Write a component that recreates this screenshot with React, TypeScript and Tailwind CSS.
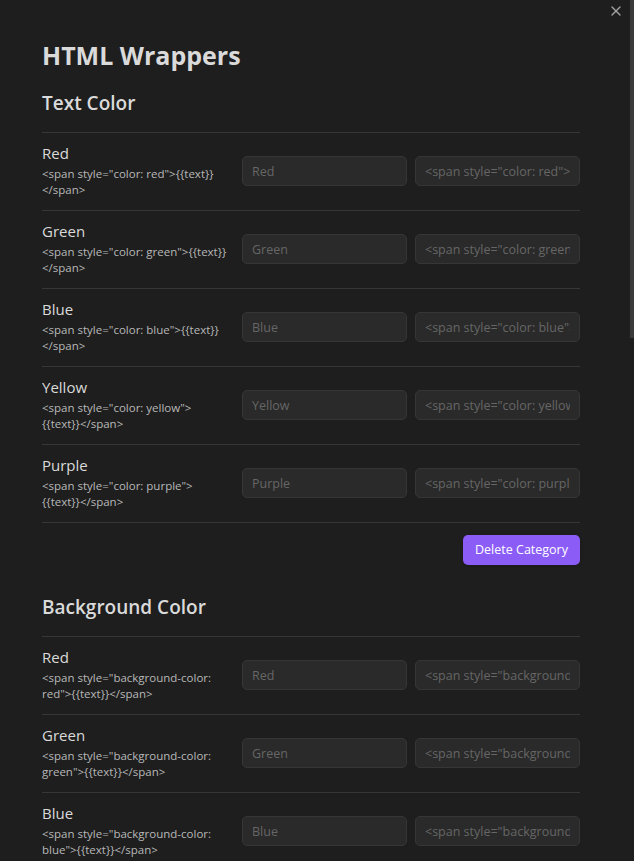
import { X } from "lucide-react";

type Wrapper = { name: string; lines: [string, string]; value: string };

const textColors: Wrapper[] = [
  { name: "Red", lines: ['<span style="color: red">{{text}}', "</span>"], value: '<span style="color: red">' },
  { name: "Green", lines: ['<span style="color: green">{{text}}', "</span>"], value: '<span style="color: green">' },
  { name: "Blue", lines: ['<span style="color: blue">{{text}}', "</span>"], value: '<span style="color: blue">' },
  { name: "Yellow", lines: ['<span style="color: yellow">', "{{text}}</span>"], value: '<span style="color: yellow">' },
  { name: "Purple", lines: ['<span style="color: purple">', "{{text}}</span>"], value: '<span style="color: purple">' },
];

const bgColors: Wrapper[] = [
  { name: "Red", lines: ['<span style="background-color:', 'red">{{text}}</span>'], value: '<span style="background-color: red">' },
  { name: "Green", lines: ['<span style="background-color:', 'green">{{text}}</span>'], value: '<span style="background-color: green">' },
  { name: "Blue", lines: ['<span style="background-color:', 'blue">{{text}}</span>'], value: '<span style="background-color: blue">' },
];

const WrapperRow = ({ name, lines, value }: Wrapper) => {
  return (
    <div className="flex items-center border-t border-[#363636] pt-[11px] pb-[12px]">
      <div className="w-[200px] flex-none flex flex-col">
        <span className="text-[15px] leading-[18px] text-[#dadada]">{name}</span>
        <span className="mt-[4px] text-[11.5px] leading-[16px] text-[#b8b8b8] whitespace-nowrap">
          {lines[0]}
          <br />
          {lines[1]}
        </span>
      </div>

      <div className="ml-auto flex gap-2">
        <input
          type="text"
          placeholder={name}
          className="w-[165px] h-[30px] rounded-[5px] border border-[#363636] bg-[#2a2a2a] px-[9px] text-[12.5px] text-[#dadada] placeholder:text-[#666666] outline-none"
        />
        <input
          type="text"
          placeholder={value}
          className="w-[165px] h-[30px] rounded-[5px] border border-[#363636] bg-[#2a2a2a] px-[9px] text-[12.5px] text-[#dadada] placeholder:text-[#666666] outline-none"
        />
      </div>
    </div>
  );
};

const Category = ({ title, items }: { title: string; items: Wrapper[] }) => {
  return (
    <section className="flex flex-col">
      <h3 className="text-[19px] leading-[26px] font-semibold text-[#dadada] mb-[16px]">{title}</h3>

      {items.map((item) => (
        <WrapperRow key={item.name} {...item} />
      ))}

      <div className="flex justify-end border-t border-[#363636] pt-[12px]">
        <button className="h-[30px] px-[12px] rounded-[5px] bg-[#8b5cf6] text-[12.5px] text-white shadow-sm">
          Delete Category
        </button>
      </div>
    </section>
  );
};

export default function App() {
  return (
    <div
      className="relative h-[861px] w-[634px] overflow-hidden bg-[#1e1e1e]"
      style={{ fontFamily: '"Open Sans", "Noto Sans", sans-serif' }}
    >
      <button className="absolute right-[10px] top-[3px] text-[#a3a3a3]">
        <X size={16} strokeWidth={2} />
      </button>
      <div className="absolute right-0 top-0 h-[338px] w-[4px] bg-[#3a3a3a]" />

      <div className="flex flex-col gap-[29px] pl-[42px] pr-[54px] pt-[38px]">
        <div className="flex flex-col">
          <h2 className="text-[25px] leading-[34px] font-bold text-[#dadada] mb-[18px]">HTML Wrappers</h2>
          <Category title="Text Color" items={textColors} />
        </div>
        <Category title="Background Color" items={bgColors} />
      </div>
    </div>
  );
}
